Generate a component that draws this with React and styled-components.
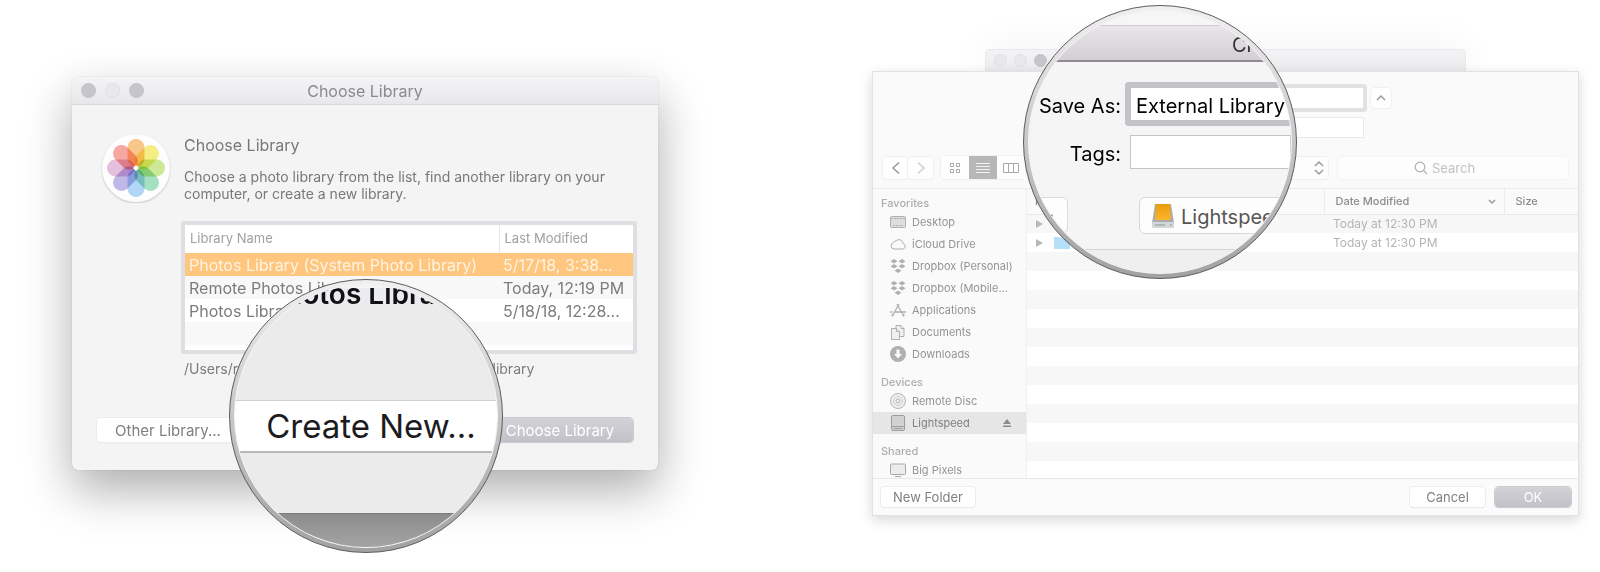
import React from "react";
import styled, { createGlobalStyle } from "styled-components";

const GlobalStyle = createGlobalStyle`
  * {
    box-sizing: border-box;
  }

  body {
    margin: 0;
    background: #fff;
    color: #7c7c80;
    font-family: Inter, "Liberation Sans", sans-serif;
    font-size: 13px;
  }

  button,
  input,
  select {
    margin: 0;
    padding: 0;
    border: 0;
    outline: 0;
    background: none;
    color: inherit;
    font: inherit;
    appearance: none;
  }
`;

const Page = styled.main`
  min-height: 100vh;
  padding: 49px 21px 48px 72px;

  display: grid;
  grid-template-columns: 586fr 707fr;
  column-gap: 214px;
  align-items: start;

  overflow: hidden;
`;

/* ---------- shared parts ---------- */

const Lights = styled.div`
  display: flex;
  gap: ${p => p.$gap}px;
`;

const Light = styled.span`
  width: ${p => p.$size}px;
  height: ${p => p.$size}px;

  border-radius: 50%;
  border: 1px solid ${p => (p.$on ? "#c2c1c8" : "#e0dfe3")};
  background: ${p => (p.$on ? "#c6c5cc" : "#e9e8eb")};
`;

const PushButton = styled.button`
  height: ${p => p.$height}px;
  min-width: ${p => p.$width}px;

  border-radius: 4px;
  background: ${p =>
    p.$primary ? "linear-gradient(#d3d2d7, #c2c1c8)" : "#fff"};
  color: ${p => (p.$primary ? "#fff" : "#808084")};
  box-shadow: 0 0 0 1px ${p => (p.$primary ? "#cccbd1" : "#ececee")},
    0 1px 1px #d8d8da;
  font-size: ${p => p.$font}px;
`;

const Ring = styled.aside`
  position: absolute;
  left: ${p => p.$left}px;
  top: ${p => p.$top}px;
  z-index: 5;

  width: 274px;
  height: 274px;
  padding: 4px;

  border: 1px solid #5c5c5c;
  border-radius: 50%;
  background: linear-gradient(#f0f0f0, #cfcfcf 40%, #a2a2a2);
`;

const Glass = styled.div`
  height: 100%;

  display: flex;
  flex-direction: column;

  border: 1px solid #f6f6f6;
  border-radius: 50%;
  background: #ebebeb;
  overflow: hidden;
`;

/* ---------- choose library window ---------- */

const LibraryWindow = styled.section`
  position: relative;

  margin-top: 28px;

  border-radius: 6px;
  background: #f4f4f4;
  box-shadow: 0 0 1px rgba(0, 0, 0, 0.3), 0 20px 48px rgba(0, 0, 0, 0.32);
`;

const TitleBar = styled.header`
  height: 28px;
  padding: 0 9px;

  display: grid;
  grid-template-columns: 1fr auto 1fr;
  align-items: center;

  border-bottom: 1px solid #d9d8dc;
  border-radius: 6px 6px 0 0;
  background: linear-gradient(#f4f3f5, #e8e7ea);
`;

const Title = styled.h1`
  margin: 0;

  color: #8b8b8f;
  font-size: 16px;
  font-weight: 400;
`;

const LibraryBody = styled.div`
  padding: 28px 21px 28px 25px;
`;

const Intro = styled.div`
  display: grid;
  grid-template-columns: 78px 1fr;
  column-gap: 9px;
`;

const PhotosIcon = styled.svg`
  width: 70px;
  height: 70px;

  justify-self: center;

  circle {
    filter: drop-shadow(0 1px 1px rgba(0, 0, 0, 0.2));
  }

  rect {
    mix-blend-mode: multiply;
  }
`;

const Heading = styled.h2`
  margin: 2px 0 13px;

  color: #78787c;
  font-size: 16px;
  font-weight: 400;
  line-height: 20px;
`;

const Blurb = styled.p`
  max-width: 430px;
  margin: 0;

  color: #78787c;
  font-size: 14px;
  line-height: 17px;
`;

const LibraryFrame = styled.div`
  height: 133px;
  margin: 18px 0 5px 84px;

  border: 4px solid #dfdfe3;
  border-radius: 3px;
  background: #fff;
  overflow: hidden;
`;

const LibraryTable = styled.table`
  width: 100%;

  border-collapse: collapse;
  table-layout: fixed;
  font-size: 16px;

  th {
    height: 28px;
    padding: 0 5px 2px;

    color: #a0a0a4;
    font-size: 13px;
    font-weight: 400;
    text-align: left;
  }

  th + th {
    width: 134px;

    border-left: 1px solid #e8e8ea;
  }

  td {
    height: 23px;
    padding: 0 4px;

    white-space: nowrap;
    overflow: hidden;
    text-overflow: ellipsis;
  }
`;

const LibraryRow = styled.tr`
  background: ${p => (p.$selected ? "#fec67f" : p.$shade ? "#f8f8f8" : "#fff")};
  color: ${p => (p.$selected ? "#fff3e2" : "inherit")};
`;

const Path = styled.p`
  margin: 0 0 0 87px;

  font-size: 14px;
  line-height: 20px;
`;

const LibraryActions = styled.div`
  margin-top: 39px;
  padding-right: 4px;

  display: flex;
  justify-content: space-between;
`;

const ZoomStrip = styled.div`
  height: 19px;
  padding-left: 32px;

  display: flex;
  align-items: flex-end;
  flex: none;

  border-top: 3px solid #f4f4f4;
  background: #ebebf2;
  color: #111;
  font-size: 28px;
  font-weight: 600;
  line-height: 30px;
  white-space: nowrap;
  overflow: hidden;

  span {
    margin-bottom: -5px;
  }
`;

const ZoomButton = styled.button`
  height: 53px;
  margin-top: 96px;
  padding-left: 10px;

  flex: none;

  border-top: 1px solid #cfcfcf;
  border-bottom: 2px solid #b8b8b8;
  background: #fff;
  color: #1c1c1f;
  font-size: 33px;
  line-height: 50px;
  white-space: nowrap;
`;

const ZoomShadow = styled.div`
  flex: 1;
  margin-top: 60px;

  border-top: 1px solid #7c7c7c;
  background: linear-gradient(#8c8c8c, #a4a4a4);
`;

/* ---------- save sheet ---------- */

const SaveStack = styled.section`
  display: flex;
  flex-direction: column;
`;

const ParentBar = styled.div`
  width: 68%;
  height: 22px;
  padding: 0 8px;

  align-self: center;
  display: flex;
  align-items: center;

  border: 1px solid #e9e9eb;
  border-bottom: 0;
  border-radius: 5px 5px 0 0;
  background: linear-gradient(#f3f3f5, #ececef);
  box-shadow: 0 0 40px rgba(0, 0, 0, 0.07);
`;

const Sheet = styled.form`
  position: relative;

  border: 1px solid #e2e2e2;
  background: #fafafa;
  box-shadow: 0 4px 12px rgba(0, 0, 0, 0.16);
`;

const Fields = styled.div`
  padding: 12px 0 18px 70px;

  display: grid;
  grid-template-columns: 237px 20px;
  gap: 5px 4px;
  justify-content: center;
  align-items: center;
`;

const NameField = styled.input`
  height: 28px;
  padding: 0 6px;

  border: 4px solid #e2e2e3;
  border-radius: 3px;
  background: #fff;
`;

const TagField = styled.input`
  height: 21px;
  margin: 0 3px;

  border: 1px solid #e9e9e9;
  background: #fff;
`;

const SmallButton = styled.button`
  width: ${p => p.$width}px;
  height: ${p => p.$height}px;

  display: flex;
  justify-content: center;
  align-items: center;

  border-radius: 4px;
  background: #fefefe;
  box-shadow: 0 0 0 1px #f0f0f0, 0 1px 1px #e4e4e4;
`;

const Toolbar = styled.div`
  padding: 0 10px 9px;

  display: flex;
  align-items: center;

  border-bottom: 1px solid #ececec;
`;

const Views = styled.div`
  margin: 0 12px 0 8px;

  display: flex;

  border-radius: 4px;
  box-shadow: 0 0 0 1px #f0f0f0, 0 1px 1px #e4e4e4;
`;

const View = styled.button`
  width: 28px;
  height: 23px;

  display: flex;
  justify-content: center;
  align-items: center;

  background: ${p => (p.$active ? "#b7b7b7" : "#fefefe")};
`;

const Place = styled.div`
  height: 22px;
  padding-right: 3px;

  flex: 1;
  display: flex;
  align-items: center;

  border-radius: 4px;
  background: #fdfdfd;
  box-shadow: 0 0 0 1px #f1f1f1, 0 1px 1px #e4e4e4;

  select {
    padding-left: 20px;

    flex: 1;
  }
`;

const Search = styled.label`
  width: 230px;
  height: 22px;
  margin-left: 10px;

  display: flex;
  justify-content: center;
  align-items: center;
  gap: 4px;

  border-radius: 4px;
  background: #fdfdfd;
  box-shadow: 0 0 0 1px #f4f4f4, 0 1px 1px #e8e8e8;

  input {
    width: 60px;
  }

  input::placeholder {
    color: #c2c2c2;
    opacity: 1;
  }
`;

const Browser = styled.div`
  height: 289px;

  display: grid;
  grid-template-columns: 154px 1fr;

  overflow: hidden;
`;

const Sidebar = styled.nav`
  border-right: 1px solid #efefef;
  color: #949494;
  font-size: 11px;
`;

const Group = styled.h3`
  margin: 0;
  padding: ${p => (p.$first ? 6 : 9)}px 8px 0;

  color: #adadad;
  font-size: 11px;
  font-weight: 500;
  line-height: 16px;
`;

const Entry = styled.a`
  height: 22px;
  padding: 0 15px 0 17px;

  display: grid;
  grid-template-columns: 16px 1fr auto;
  column-gap: 6px;
  align-items: center;

  background: ${p => (p.$active ? "#e6e6e6" : "none")};
  color: ${p => (p.$active ? "#808080" : "inherit")};
  text-decoration: none;
  white-space: nowrap;
`;

const FileTable = styled.table`
  width: 100%;
  height: max-content;

  border-collapse: collapse;
  table-layout: fixed;
  color: #b4b4b4;
  font-size: 12px;

  th {
    height: 25px;
    padding: 0 8px 1px;

    border-bottom: 1px solid #e8e8e8;
    color: #8c8c8c;
    font-size: 11px;
    font-weight: 500;
    text-align: left;
  }

  th + th {
    width: 180px;
    padding-left: 11px;

    border-left: 1px solid #ececec;
  }

  th + th + th {
    width: 74px;
  }

  td {
    height: 19px;
    padding: 0 9px;
  }

  tbody tr:nth-child(odd) {
    background: #f7f7f7;
  }

  tbody tr:nth-child(even) {
    background: #fff;
  }
`;

const Spread = styled.span`
  display: flex;
  justify-content: space-between;
  align-items: center;
`;

const FileName = styled.span`
  display: flex;
  align-items: center;
  gap: 11px;
`;

const SheetActions = styled.footer`
  padding: 8px 7px 8px 8px;

  display: flex;
  gap: 10px;

  border-top: 1px solid #e8e8e8;
  background: #fbfbfb;

  button:first-child {
    margin-right: auto;
  }
`;

const ZoomTop = styled.div`
  height: 15px;

  flex: none;

  border-bottom: 1px solid #cfcccf;
  background: #f7f6f7;
`;

const ZoomTitle = styled.div`
  height: 36px;
  padding-left: 203px;

  flex: none;

  border-bottom: 2px solid #8f8b90;
  background: linear-gradient(#e9e5ea, #d3ced4);
  color: #333;
  font-size: 20px;
  line-height: 38px;
  white-space: nowrap;
`;

const ZoomForm = styled.div`
  padding: 20px 0 28px;

  display: grid;
  grid-template-columns: 92px 1fr;
  gap: 9px 4px;
  align-items: center;

  background: #f5f5f5;
  color: #000;
  font-size: 20px;

  label {
    padding-top: 3px;

    text-align: right;
    white-space: nowrap;
  }
`;

const ZoomName = styled.input`
  min-width: 0;
  height: 44px;
  padding: 4px 0 0 5px;

  border: 6px solid #c3c3c7;
  border-right: 0;
  border-radius: 4px 0 0 4px;
  background: #fff;
`;

const ZoomTags = styled.input`
  min-width: 0;
  height: 34px;
  margin-left: 5px;

  border: 1px solid #c4c4c4;
  background: #fff;
`;

const ZoomTools = styled.div`
  padding-bottom: 15px;

  display: grid;
  grid-template-columns: 39px 1fr;
  column-gap: 71px;

  border-bottom: 1px solid #d4d4d4;
  background: #f5f5f5;
`;

const ZoomMore = styled.button`
  height: 37px;
  padding: 0 13px 12px 0;

  border: 1px solid #dcdcdc;
  border-radius: 0 6px 6px 0;
  background: #fdfdfd;
  color: #333;
  font-size: 20px;
  text-align: right;
`;

const ZoomPlace = styled.div`
  height: 37px;
  padding-left: 11px;

  display: flex;
  align-items: center;
  gap: 6px;

  border: 1px solid #d8d8d8;
  border-radius: 6px;
  background: #fdfdfd;
  color: #555;
  font-size: 20px;

  select {
    width: 130px;
    padding-top: 2px;
  }
`;

const ZoomRest = styled.div`
  flex: 1;

  background: #efefef;
`;

/* ---------- drawings ---------- */

const petals = [
  "#fcc98c",
  "#f7f086",
  "#cfea98",
  "#a6e2c5",
  "#b6d8f8",
  "#c2bae8",
  "#e8c0e0",
  "#f9a8a2"
];

const Flower = () => (
  <PhotosIcon viewBox="-35 -35 70 70" aria-hidden="true">
    <circle r="34" fill="#fdfdfd" />
    {petals.map((fill, i) => (
      <rect
        key={fill}
        x="-8.500"
        y="-29"
        width="17"
        height="28"
        rx="8.500"
        fill={fill}
        transform={`rotate(${i * 45})`}
      />
    ))}
    <path d="M0-3l3 3-3 3-3-3z" fill="#fff" />
  </PhotosIcon>
);

const Chevron = ({ d, color = "#9a9a9a", w = 12, h = 16, stroke = 1.5 }) => (
  <svg width={w} height={h} viewBox={`0 0 ${w} ${h}`} aria-hidden="true">
    <path d={d} fill="none" stroke={color} strokeWidth={stroke} />
  </svg>
);

const glyphs = {
  desktop: (
    <g fill="#dedede" stroke="#b0b0b0">
      <rect x=".5" y="2.500" width="15" height="11" rx="1" />
      <path d="M1 4.500h14M3 11.500h10" strokeDasharray="2 1" />
    </g>
  ),
  cloud: (
    <path
      d="M4 13a3.200 3.200 0 0 1-.5-6.300A2.400 2.400 0 0 1 6 5a4 4 0 0 1 7 2.500A2.800 2.800 0 0 1 12.800 13z"
      fill="#fafafa"
      stroke="#b0b0b0"
    />
  ),
  dropbox: (
    <path
      d="M4 1l3.500 2.200L4 5.400.5 3.200zM12 1l3.500 2.200L12 5.400 8.500 3.200zM4 6l3.500 2.200L4 10.400.5 8.200zM12 6l3.500 2.200-3.500 2.200-3.500-2.200zM8 10.500l3.500 2.200L8 15l-3.500-2.300z"
      fill="#b0b0b0"
    />
  ),
  apps: (
    <g fill="none" stroke="#b0b0b0" strokeWidth="1.300">
      <path d="M2 14.500L9 2M7 2l7 12.500M5 10h11M0 10h2.500" />
      <path d="M1.500 12.500l2 1M12.500 13.500l2-1" />
    </g>
  ),
  docs: (
    <g fill="#f0f0f0" stroke="#b0b0b0">
      <path d="M6 1.500h5l3 3v8H6z" />
      <path d="M11 1.500v3h3" />
      <path d="M1.500 4.500h5l3 3v8h-8z" />
      <path d="M6.500 4.500v3h3" />
    </g>
  ),
  downloads: (
    <g>
      <circle cx="8" cy="8" r="8" fill="#b0b0b0" />
      <path d="M6.500 3.500h3V8H12l-4 4.500L4 8h2.500z" fill="#fafafa" />
    </g>
  ),
  disc: (
    <g fill="#efefef" stroke="#b4b4b4">
      <circle cx="8" cy="8" r="7.500" />
      <circle cx="8" cy="8" r="4.500" fill="none" stroke="#cfcfcf" />
      <circle cx="8" cy="8" r="2" />
    </g>
  ),
  drive: (
    <g fill="#d2d2d2" stroke="#9c9c9c">
      <rect x="1.500" y=".5" width="13" height="15" rx="1.500" />
      <path d="M2 11.500h12M3.500 13.500h9" />
    </g>
  ),
  display: (
    <g fill="#ececec" stroke="#a8a8a8">
      <rect x=".5" y="2" width="15" height="10.500" rx="1" />
      <path d="M5 14.500h6" />
    </g>
  )
};

const Glyph = ({ name }) => (
  <svg width="16" height="16" viewBox="0 0 16 16" aria-hidden="true">
    {glyphs[name]}
  </svg>
);

const Eject = () => (
  <svg width="8" height="10" viewBox="0 0 8 10" aria-hidden="true">
    <path d="M4 1l4 5H0zM0 7.500h8V9H0z" fill="#8a8a8a" />
  </svg>
);

const Disk = () => (
  <svg width="24" height="26" viewBox="0 0 24 26" aria-hidden="true">
    <defs>
      <linearGradient id="disk" x2="0" y2="1">
        <stop stopColor="#e89c10" />
        <stop offset="1" stopColor="#ffb52a" />
      </linearGradient>
    </defs>
    <path d="M4 1h16l3 19v4H1v-4z" fill="#a9adb0" />
    <rect x="1" y="19" width="22" height="6" rx="1.500" fill="#d3d7d8" />
    <path d="M5 1h14l1 14a3 2 0 0 1-3 2H7a3 2 0 0 1-3-2z" fill="url(#disk)" />
    <path d="M4 22h10M19 22h2" stroke="#8e9496" />
  </svg>
);

/* ---------- data ---------- */

const libraries = [
  ["Photos Library (System Photo Library)", "5/17/18, 3:38..."],
  ["Remote Photos Library", "Today, 12:19 PM"],
  ["Photos Library 2", "5/18/18, 12:28..."],
  ["", ""]
];

const places = [
  {
    name: "Favorites",
    items: [
      ["desktop", "Desktop"],
      ["cloud", "iCloud Drive"],
      ["dropbox", "Dropbox (Personal)"],
      ["dropbox", "Dropbox (Mobile..."],
      ["apps", "Applications"],
      ["docs", "Documents"],
      ["downloads", "Downloads"]
    ]
  },
  {
    name: "Devices",
    items: [
      ["disc", "Remote Disc"],
      ["drive", "Lightspeed"]
    ]
  },
  { name: "Shared", items: [["display", "Big Pixels"]] }
];

const files = Array.from({ length: 14 }, (_, i) => ({
  date: i < 2 ? "Today at 12:30 PM" : "",
  folder: i === 1
}));

const ChooseLibrary = () => (
  <LibraryWindow>
    <TitleBar>
      <Lights $gap={9}>
        <Light $size={15} $on />
        <Light $size={15} />
        <Light $size={15} $on />
      </Lights>
      <Title>Choose Library</Title>
    </TitleBar>
    <LibraryBody>
      <Intro>
        <Flower />
        <div>
          <Heading>Choose Library</Heading>
          <Blurb>
            Choose a photo library from the list, find another library on your
            computer, or create a new library.
          </Blurb>
        </div>
      </Intro>
      <LibraryFrame>
        <LibraryTable>
          <thead>
            <tr>
              <th>Library Name</th>
              <th>Last Modified</th>
            </tr>
          </thead>
          <tbody>
            {libraries.map(([name, date], i) => (
              <LibraryRow key={i} $selected={i === 0} $shade={i % 2 === 1}>
                <td>{name}</td>
                <td>{date}</td>
              </LibraryRow>
            ))}
          </tbody>
        </LibraryTable>
      </LibraryFrame>
      <Path>/Users/renee/Pictures/Photos Library 2.photoslibrary</Path>
      <LibraryActions>
        <PushButton $height={24} $width={142} $font={15}>
          Other Library...
        </PushButton>
        <PushButton $height={24} $width={146} $font={15} $primary>
          Choose Library
        </PushButton>
      </LibraryActions>
    </LibraryBody>
    <Ring $left={157} $top={202}>
      <Glass>
        <ZoomStrip>
          <span>Photos Library</span>
        </ZoomStrip>
        <ZoomButton>Create New...</ZoomButton>
        <ZoomShadow />
      </Glass>
    </Ring>
  </LibraryWindow>
);

const SaveSheet = () => (
  <SaveStack>
    <ParentBar>
      <Lights $gap={7}>
        <Light $size={13} />
        <Light $size={13} />
        <Light $size={13} $on />
      </Lights>
    </ParentBar>
    <Sheet onSubmit={e => e.preventDefault()}>
      <Fields>
        <NameField aria-label="Save As" />
        <SmallButton type="button" $width={20} $height={20} aria-label="Collapse">
          <Chevron d="M2 10l4-4 4 4" />
        </SmallButton>
        <TagField aria-label="Tags" />
      </Fields>
      <Toolbar>
        <SmallButton type="button" $width={25} $height={22} aria-label="Back">
          <Chevron d="M9 2.500L3 8l6 5.500" />
        </SmallButton>
        <SmallButton type="button" $width={25} $height={22} aria-label="Forward">
          <Chevron d="M3 2.500L9 8l-6 5.500" color="#cfcfcf" />
        </SmallButton>
        <Views>
          <View type="button" aria-label="Icons">
            <Chevron
              d="M1.500 2.500h3v3h-3zM7.500 2.500h3v3h-3zM1.500 8.500h3v3h-3zM7.500 8.500h3v3h-3z"
              color="#a8a8a8"
              h={14}
              stroke={1}
            />
          </View>
          <View type="button" aria-label="List" $active>
            <Chevron
              d="M0 1.500h14M0 4.500h14M0 7.500h14M0 10.500h14"
              color="#f2f2f2"
              w={14}
              h={12}
              stroke={1}
            />
          </View>
          <View type="button" aria-label="Columns">
            <Chevron
              d="M.5 1.500h15v9H.5zM5.500 1.500v9M10.500 1.500v9"
              color="#a8a8a8"
              w={16}
              h={12}
              stroke={1}
            />
          </View>
        </Views>
        <Place>
          <select aria-label="Location">
            <option>Lightspeed</option>
          </select>
          <Chevron d="M2 6l4-4 4 4M2 10l4 4 4-4" />
        </Place>
        <Search>
          <svg width="14" height="14" viewBox="0 0 14 14" aria-hidden="true">
            <g fill="none" stroke="#b0b0b0" strokeWidth="1.200">
              <circle cx="6" cy="6" r="4.800" />
              <path d="M9.500 9.500L13 13" />
            </g>
          </svg>
          <input placeholder="Search" aria-label="Search" />
        </Search>
      </Toolbar>
      <Browser>
        <Sidebar>
          {places.map((group, g) => (
            <React.Fragment key={group.name}>
              <Group $first={g === 0}>{group.name}</Group>
              {group.items.map(([icon, label]) => (
                <Entry key={label} href="#" $active={icon === "drive"}>
                  <Glyph name={icon} />
                  {label}
                  {icon === "drive" && <Eject />}
                </Entry>
              ))}
            </React.Fragment>
          ))}
        </Sidebar>
        <FileTable>
          <thead>
            <tr>
              <th>Name</th>
              <th>
                <Spread>
                  Date Modified
                  <Chevron d="M1 3l3 3 3-3" w={8} h={8} />
                </Spread>
              </th>
              <th>Size</th>
            </tr>
          </thead>
          <tbody>
            {files.map((file, i) => (
              <tr key={i}>
                <td>
                  {file.date && (
                    <FileName>
                      <svg width="7" height="8" aria-hidden="true">
                        <path d="M0 0l7 4-7 4z" fill="#b8b8b8" />
                      </svg>
                      {file.folder && (
                        <svg width="16" height="12" aria-hidden="true">
                          <path d="M0 0h6l1 1h9v11H0z" fill="#b5e0f7" />
                        </svg>
                      )}
                    </FileName>
                  )}
                </td>
                <td>{file.date}</td>
                <td />
              </tr>
            ))}
          </tbody>
        </FileTable>
      </Browser>
      <SheetActions>
        <PushButton type="button" $height={20} $width={94} $font={13}>
          New Folder
        </PushButton>
        <PushButton type="button" $height={20} $width={75} $font={13}>
          Cancel
        </PushButton>
        <PushButton $height={20} $width={76} $font={13} $primary>
          OK
        </PushButton>
      </SheetActions>
      <Ring $left={150} $top={-67}>
        <Glass>
          <ZoomTop />
          <ZoomTitle>Choose Library</ZoomTitle>
          <ZoomForm>
            <label htmlFor="zoom-name">Save As:</label>
            <ZoomName id="zoom-name" defaultValue="External Library" />
            <label htmlFor="zoom-tags">Tags:</label>
            <ZoomTags id="zoom-tags" />
          </ZoomForm>
          <ZoomTools>
            <ZoomMore type="button">.</ZoomMore>
            <ZoomPlace>
              <Disk />
              <select aria-label="Location">
                <option>Lightspeed</option>
              </select>
            </ZoomPlace>
          </ZoomTools>
          <ZoomRest />
        </Glass>
      </Ring>
    </Sheet>
  </SaveStack>
);

export default function App() {
  return (
    <>
      <GlobalStyle />
      <Page>
        <ChooseLibrary />
        <SaveSheet />
      </Page>
    </>
  );
}
